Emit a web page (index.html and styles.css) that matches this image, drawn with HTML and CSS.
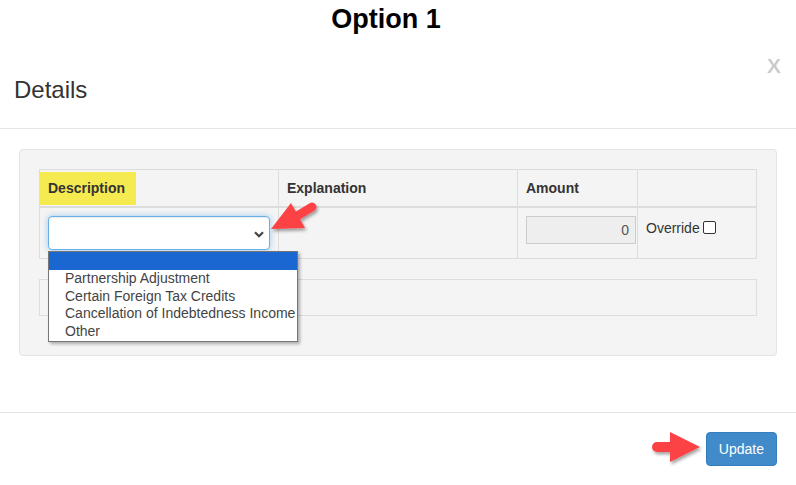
FILE: index.html
```html
<!DOCTYPE html>
<html>
<head>
<meta charset="utf-8">
<link rel="stylesheet" href="styles.css">
</head>
<body>
<h1 class="page-title">Option 1</h1>
<div class="modal">
  <div class="modal-header">
    <h4 class="modal-title">Details</h4>
    <span class="close">X</span>
  </div>
  <div class="modal-body">
    <div class="well">
      <table class="grid">
        <colgroup>
          <col class="c1"><col class="c2"><col class="c3"><col class="c4">
        </colgroup>
        <thead>
          <tr>
            <th><span class="hl">Description</span></th>
            <th>Explanation</th>
            <th>Amount</th>
            <th></th>
          </tr>
        </thead>
        <tbody>
          <tr>
            <td>
              <div class="select-wrap">
                <div class="select">
                  <svg class="chev" width="10" height="7" viewBox="0 0 10 7"><path d="M1 1.2 L5 5.2 L9 1.2" fill="none" stroke="#444" stroke-width="2.2"/></svg>
                </div>
                <ul class="options">
                  <li class="sel"></li>
                  <li>Partnership Adjustment</li>
                  <li>Certain Foreign Tax Credits</li>
                  <li>Cancellation of Indebtedness Income</li>
                  <li>Other</li>
                </ul>
              </div>
            </td>
            <td></td>
            <td><div class="amount">0</div></td>
            <td class="ov-cell"><span class="override">Override</span><span class="check"></span></td>
          </tr>
        </tbody>
      </table>
      <div class="empty-box"></div>
    </div>
  </div>
  <div class="modal-footer">
    <button class="btn">Update</button>
  </div>
</div>
<svg class="arrow arrow1" width="70" height="50" viewBox="0 0 70 50">
  <g filter="url(#sh)">
    <line x1="37" y1="21" x2="52" y2="12" stroke="#fc4245" stroke-width="9" stroke-linecap="round"/>
    <polygon points="11,34 31,8 45,33" fill="#fc4245"/>
  </g>
  <defs><filter id="sh" x="-20%" y="-20%" width="150%" height="160%"><feDropShadow dx="1.5" dy="2.5" stdDeviation="1.5" flood-color="#000" flood-opacity="0.35"/></filter></defs>
</svg>
<svg class="arrow arrow2" width="65" height="45" viewBox="0 0 65 45">
  <g filter="url(#sh2)">
    <line x1="12" y1="22" x2="30" y2="22" stroke="#fc4245" stroke-width="10" stroke-linecap="round"/>
    <polygon points="55,22 25,7 25,37" fill="#fc4245"/>
  </g>
  <defs><filter id="sh2" x="-20%" y="-20%" width="150%" height="160%"><feDropShadow dx="1.5" dy="2.5" stdDeviation="1.5" flood-color="#000" flood-opacity="0.35"/></filter></defs>
</svg>
</body>
</html>
```
FILE: styles.css
```css
* { box-sizing: border-box; }
html, body { margin: 0; padding: 0; background: #fff; }
body {
  width: 796px;
  height: 485px;
  overflow: hidden;
  position: relative;
  font-family: "Liberation Sans", Arial, sans-serif;
  font-size: 14px;
  line-height: 20px;
  color: #333;
}
.page-title {
  margin: 0;
  height: 42px;
  line-height: 38px;
  font-size: 27px;
  font-weight: bold;
  color: #000;
  text-align: center;
  padding-right: 24px;
}
.modal { background: #fff; }
.modal-header {
  display: flex;
  justify-content: space-between;
  align-items: flex-start;
  padding: 13px 15px 0 14px;
  height: 87px;
  border-bottom: 1px solid #e5e5e5;
}
.modal-title {
  margin: 23px 0 0 0;
  font-size: 24px;
  font-weight: normal;
  line-height: 24px;
  color: #333;
}
.close {
  font-size: 21px;
  font-weight: bold;
  line-height: 21px;
  color: #000;
  opacity: 0.2;
}
.modal-body { padding: 20px 19px 56px 19px; }
.well {
  background: #f4f4f4;
  border: 1px solid #e3e3e3;
  border-radius: 4px;
  padding: 19px;
}
.grid {
  width: 100%;
  border-collapse: collapse;
  table-layout: fixed;
  margin-bottom: 20px;
}
.c1 { width: 239px; }
.c2 { width: 239px; }
.c3 { width: 120px; }
.grid th, .grid td {
  border: 1px solid #ddd;
  padding: 8px;
  text-align: left;
  vertical-align: top;
  line-height: 20px;
}
.grid th { border-bottom-width: 2px; font-weight: bold; }
.grid td.ov-cell { padding-top: 10px; }
.hl {
  display: inline-block;
  background: #f5ea50;
  margin: -6px -11px -7px -8px;
  padding: 6px 11px 7px 8px;
}
.select-wrap { position: relative; }
.select {
  height: 34px;
  border: 1px solid #66afe9;
  border-radius: 4px;
  background: #fff;
  box-shadow: inset 0 1px 1px rgba(0,0,0,.075), 0 0 6px rgba(102,175,233,.6);
  display: flex;
  justify-content: flex-end;
  align-items: center;
  padding-right: 5px;
}
.chev { margin-top: 2px; }
.options {
  position: absolute;
  left: 0;
  top: 35px;
  width: 250px;
  margin: 0;
  padding: 0;
  list-style: none;
  background: #fff;
  border: 1px solid #767676;
  box-shadow: 2px 2px 3px rgba(0,0,0,.3);
  z-index: 5;
}
.options li {
  height: 17.8px;
  line-height: 17px;
  padding-left: 16px;
  font-size: 14px;
  color: #444;
  white-space: nowrap;
}
.options li.sel { background: #1a67d2; }
.amount {
  width: 110px;
  height: 28px;
  background: #eee;
  border: 1px solid #ccc;
  padding: 4px 6px;
  line-height: 18px;
  text-align: right;
  color: #555;
}
.override { font-size: 14px; color: #333; }
.check {
  display: inline-block;
  width: 13px;
  height: 13px;
  border: 1px solid #333;
  border-radius: 2px;
  background: #fff;
  margin-left: 3px;
  vertical-align: -1px;
}
.empty-box {
  height: 37px;
  border: 1px solid #ddd;
  margin-bottom: 20px;
}
.modal-footer {
  border-top: 1px solid #e5e5e5;
  padding: 19px 19px;
  display: flex;
  justify-content: flex-end;
}
.btn {
  font-family: "Liberation Sans", Arial, sans-serif;
  font-size: 14px;
  line-height: 20px;
  padding: 6px 12px;
  color: #fff;
  background: #428bca;
  border: 1px solid #357ebd;
  border-radius: 4px;
}
.arrow { position: absolute; overflow: visible; }
.arrow1 { left: 260px; top: 195px; }
.arrow2 { left: 645px; top: 425px; }
```
